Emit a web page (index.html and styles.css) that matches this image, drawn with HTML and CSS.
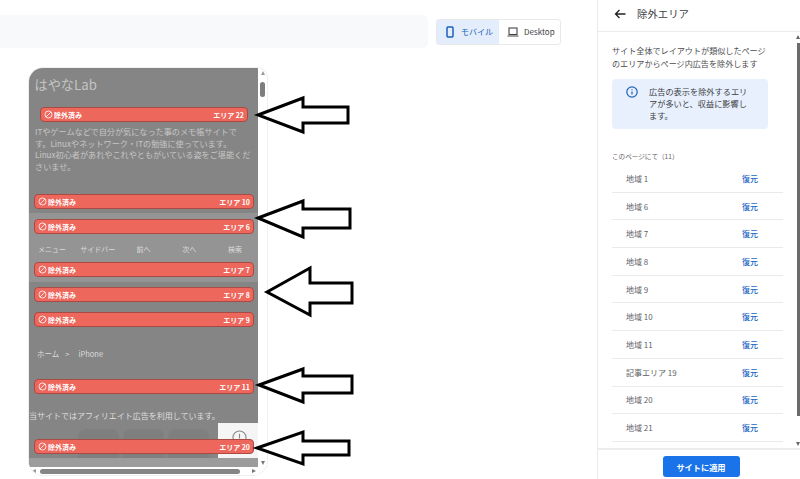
FILE: index.html
```html
<!DOCTYPE html>
<html lang="ja">
<head>
<meta charset="utf-8">
<title>除外エリア</title>
<link rel="stylesheet" href="styles.css">
</head>
<body>
<div class="page">
  <main class="main">
    <div class="topbar">
      <div class="search"></div>
      <div class="toggle">
        <div class="toggle-item active">
          <svg class="toggle-icon" viewBox="0 0 12 12"><rect x="3" y="1" width="6" height="10" rx="1" fill="none" stroke="#1a5fb8" stroke-width="1.5"/></svg>
          <span>モバイル</span>
        </div>
        <div class="toggle-item">
          <svg class="toggle-icon" viewBox="0 0 12 12"><rect x="2" y="2" width="8" height="6.5" fill="none" stroke="#444" stroke-width="1.1"/><path d="M0.5 10h11" stroke="#444" stroke-width="1.1"/></svg>
          <span>Desktop</span>
        </div>
      </div>
    </div>

    <div class="phone">
      <div class="view">
        <div class="site-title">はやなLab</div>
        <div class="banner banner-inset gap-title"><span class="banner-left"><svg class="ban" viewBox="0 0 10 10"><circle cx="5" cy="5" r="3.9"/><path d="M2.3 7.7 7.7 2.3"/></svg>除外済み</span><span>エリア 22</span></div>
        <p class="intro">ITやゲームなどで自分が気になった事のメモ帳サイトです。Linuxやネットワーク・ITの勉強に使っています。Linux初心者があれやこれやともがいている姿をご堪能くださいませ。</p>
        <div class="banner gap-intro"><span class="banner-left"><svg class="ban" viewBox="0 0 10 10"><circle cx="5" cy="5" r="3.9"/><path d="M2.3 7.7 7.7 2.3"/></svg>除外済み</span><span>エリア 10</span></div>
        <div class="navband">
          <div class="banner"><span class="banner-left"><svg class="ban" viewBox="0 0 10 10"><circle cx="5" cy="5" r="3.9"/><path d="M2.3 7.7 7.7 2.3"/></svg>除外済み</span><span>エリア 6</span></div>
          <nav class="sitenav"><span>メニュー</span><span>サイドバー</span><span>前へ</span><span>次へ</span><span>検索</span></nav>
          <div class="banner"><span class="banner-left"><svg class="ban" viewBox="0 0 10 10"><circle cx="5" cy="5" r="3.9"/><path d="M2.3 7.7 7.7 2.3"/></svg>除外済み</span><span>エリア 7</span></div>
        </div>
        <div class="banner gap-band"><span class="banner-left"><svg class="ban" viewBox="0 0 10 10"><circle cx="5" cy="5" r="3.9"/><path d="M2.3 7.7 7.7 2.3"/></svg>除外済み</span><span>エリア 8</span></div>
        <div class="banner gap-9"><span class="banner-left"><svg class="ban" viewBox="0 0 10 10"><circle cx="5" cy="5" r="3.9"/><path d="M2.3 7.7 7.7 2.3"/></svg>除外済み</span><span>エリア 9</span></div>
        <div class="crumb"><span>ホーム</span><span>&gt;</span><span class="crumb-leaf">iPhone</span></div>
        <div class="banner"><span class="banner-left"><svg class="ban" viewBox="0 0 10 10"><circle cx="5" cy="5" r="3.9"/><path d="M2.3 7.7 7.7 2.3"/></svg>除外済み</span><span>エリア 11</span></div>
        <div class="notice">当サイトではアフィリエイト広告を利用しています。</div>
        <div class="ad">
          <div class="ad-btn"></div><div class="ad-btn"></div><div class="ad-btn"></div>
          <div class="ad-info"><svg class="ad-icon" viewBox="0 0 16 16"><circle cx="8" cy="8" r="7"/><path d="M8 4v5"/></svg></div>
          <div class="banner banner-over"><span class="banner-left"><svg class="ban" viewBox="0 0 10 10"><circle cx="5" cy="5" r="3.9"/><path d="M2.3 7.7 7.7 2.3"/></svg>除外済み</span><span>エリア 20</span></div>
        </div>
        <div class="endband"></div>
      </div>
      <div class="vbar">
        <i class="tri tri-up"></i>
        <div class="vthumb"></div>
        <i class="tri tri-down"></i>
      </div>
      <div class="hbar">
        <i class="tri tri-left"></i>
        <div class="hthumb"></div>
        <i class="tri tri-right"></i>
      </div>
    </div>
  </main>

  <aside class="side">
    <header class="side-head">
      <svg class="back" viewBox="0 0 12 12"><path d="M11.5 6H1.5M5.5 2 1.5 6l4 4" fill="none" stroke="#222" stroke-width="1.3"/></svg>
      <span>除外エリア</span>
    </header>
    <div class="side-body">
      <div class="side-scroll">
        <p class="desc">サイト全体でレイアウトが類似したページのエリアからページ内広告を除外します</p>
        <div class="info">
          <svg class="info-icon" viewBox="0 0 12 12"><circle cx="6" cy="6" r="5.2" fill="none" stroke="#1a5fb8" stroke-width="1.2"/><path d="M6 5.4v3.2M6 3.2v1.1" stroke="#1a5fb8" stroke-width="1.2"/></svg>
          <p>広告の表示を除外するエリアが多いと、収益に影響します。</p>
        </div>
        <div class="count">このページにて（11）</div>
        <ul class="list">
          <li><span>地域 1</span><a>復元</a></li>
          <li><span>地域 6</span><a>復元</a></li>
          <li><span>地域 7</span><a>復元</a></li>
          <li><span>地域 8</span><a>復元</a></li>
          <li><span>地域 9</span><a>復元</a></li>
          <li><span>地域 10</span><a>復元</a></li>
          <li><span>地域 11</span><a>復元</a></li>
          <li><span>記事エリア 19</span><a>復元</a></li>
          <li><span>地域 20</span><a>復元</a></li>
          <li><span>地域 21</span><a>復元</a></li>
        </ul>
      </div>
      <div class="side-bar">
        <i class="tri tri-up tri-dark"></i>
        <div class="side-thumb"></div>
        <i class="tri tri-down tri-dark"></i>
      </div>
    </div>
    <footer class="side-foot"><button class="apply">サイトに適用</button></footer>
  </aside>
</div>

<svg class="arrows" viewBox="0 0 800 479">
  <path d="M258 115 303 98V107H348V123H303V132Z"/>
  <path d="M258 218 303 201V209H350V228H303V237Z"/>
  <path d="M267 292 310 268V283H352V303H310V315Z"/>
  <path d="M259 385 303 369V376H352V393H303V402Z"/>
  <path d="M257 448 303 432V441H349V455H303V464Z"/>
</svg>
</body>
</html>
```

FILE: styles.css
```css
* { box-sizing: border-box; }
html, body { margin: 0; height: 100%; overflow: hidden; }
body {
  position: relative;
  background: #fff;
  font-family: "Noto Sans CJK JP", "Noto Sans", sans-serif;
  color: #3c4043;
}
p { margin: 0; }
.page { display: flex; height: 479px; }

/* main */
.main { width: 597px; flex: none; padding-top: 15px; }
.topbar { display: flex; align-items: center; height: 33px; }
.search { width: 428px; height: 33px; background: #f8f9fa; border-radius: 0 6px 6px 0; }
.toggle {
  display: flex;
  margin-left: 8px;
  width: 125px;
  height: 26px;
  border: 1px solid #e6e8eb;
  border-radius: 3px;
  overflow: hidden;
  font-size: 8px;
}
.toggle-item { display: flex; align-items: center; gap: 5px; padding-left: 8px; flex: 1; color: #3c4043; }
.toggle-item.active { flex: none; width: 62px; background: #e3edfb; color: #1a5fb8; padding-left: 7px; }
.toggle-icon { width: 12px; height: 12px; flex: none; }

/* phone preview */
.phone {
  display: grid;
  grid-template-columns: 229px 9px;
  grid-template-rows: 399px 8px;
  width: 238px;
  height: 407px;
  margin: 20px 0 0 29px;
  border-radius: 14px 10px 14px 14px;
  box-shadow: 0 0 0 1px #eeeff1;
  overflow: hidden;
}
.view { position: relative; background: #858585; overflow: hidden; color: #d2d2d2; display: flex; flex-direction: column; }
.site-title { margin: 7px 0 0 5.5px; height: 21px; font-size: 13.2px; line-height: 20px; color: #c4c4c4; }
.banner {
  flex: none;
  display: flex;
  align-items: center;
  justify-content: space-between;
  width: 220px;
  height: 15px;
  margin-left: 5px;
  padding: 0 3px 0 3px;
  background: #ee675c;
  border: 1px solid #a94a44;
  border-radius: 4px;
  color: #fff;
  font-size: 7px;
  font-weight: 700;
}
.banner-inset { width: 208px; margin-left: 11px; }
.gap-title { margin-top: 11px; }
.gap-intro { margin-top: 22px; }
.gap-band { margin-top: 5px; }
.gap-9 { margin-top: 10px; }
.banner-left { display: flex; align-items: center; gap: 1px; }
.ban { width: 9px; height: 9px; fill: none; stroke: #fff; stroke-width: 0.9; }
.intro { margin: 4px 7px 0 6px; height: 46px; font-size: 8.15px; line-height: 11.5px; color: #c6c6c6; }
.navband {
  margin-top: 4px;
  height: 69px;
  padding-top: 6px;
  background: #949494;
}
.sitenav { display: grid; grid-template-columns: repeat(5, 1fr); justify-items: center; align-items: center; height: 28px; padding-top: 2px; font-size: 7px; color: #dcdcdc; }
.crumb { display: flex; gap: 6px; height: 52px; align-items: flex-end; padding: 0 0 20px 8px; font-size: 7.5px; color: #dcdcdc; }
.crumb-leaf { margin-left: 3px; }
.notice { height: 29px; padding-top: 15px; font-size: 8px; line-height: 14px; color: #dedede; white-space: nowrap; }
.ad { position: relative; display: flex; align-items: flex-end; flex: none; height: 35px; padding-left: 49px; gap: 4px; }
.ad-btn { width: 41px; height: 29px; background: #7f7f7f; border-radius: 8px 8px 0 0; }
.ad-info { position: absolute; right: 0; top: 0; width: 40px; height: 35px; background: #f5f5f5; display: flex; justify-content: center; padding: 7px 0 0 3px; }
.ad-icon { width: 15px; height: 15px; fill: none; stroke: #8a8a8a; stroke-width: 1.2; }
.banner-over { position: absolute; left: 0; top: 16px; }
.endband { flex: none; height: 9px; background: #9c9c9c; }

.vbar { position: relative; background: #fff; display: flex; flex-direction: column; align-items: center; padding-top: 3px; }
.vthumb { width: 5px; height: 15px; margin-top: 7px; background: #7d7d7d; border-radius: 3px; }
.hbar { display: flex; align-items: center; background: #fff; padding-left: 3px; }
.hthumb { flex: none; width: 200px; height: 5px; margin: 0 12px 0 4px; background: #858585; border-radius: 3px; }
.tri { display: block; width: 0; height: 0; flex: none; border-style: solid; border-color: transparent; }
.tri-up { border-width: 0 2.5px 4px; border-bottom-color: #9a9a9a; }
.tri-down { position: absolute; bottom: 2px; border-width: 4px 2.5px 0; border-top-color: #777; }
.tri-left { border-width: 2.5px 4px 2.5px 0; border-right-color: #9a9a9a; }
.tri-right { border-width: 2.5px 0 2.5px 4px; border-left-color: #777; }

/* side panel */
.side {
  width: 203px;
  flex: none;
  display: flex;
  flex-direction: column;
  border-left: 1px solid #e8eaed;
}
.side-head {
  display: flex;
  align-items: center;
  height: 32px;
  padding: 0 0 4px 16px;
  gap: 11px;
  flex: none;
  border-bottom: 1px solid #eceded;
  font-size: 10.4px;
  color: #3c4043;
}
.back { width: 12px; height: 12px; }
.side-body { flex: 1; display: flex; min-height: 0; }
.side-scroll { width: 199px; padding: 12px 14px 0 14px; overflow: hidden; }
.desc { font-size: 8.1px; line-height: 13px; width: 160px; color: #4a4d50; }
.info {
  display: flex;
  width: 156px;
  height: 50px;
  margin-top: 9px;
  padding: 6px 16px 0 14px;
  gap: 11px;
  background: #e8f0fe;
  border-radius: 4px;
  font-size: 8.2px;
  line-height: 12.2px;
}
.info-icon { width: 12px; height: 12px; flex: none; margin-top: 1px; }
.count { margin-top: 22px; font-size: 6.6px; line-height: 10px; color: #5f6368; }
.list { list-style: none; margin: 4px 0 0; padding: 0; width: 171px; }
.list li {
  display: flex;
  justify-content: space-between;
  align-items: center;
  height: 27.7px;
  padding: 0 25px 0 14px;
  border-bottom: 1px solid #e8eaed;
  font-size: 8px;
  color: #5f6368;
}
.list a { color: #1a66c4; font-weight: 500; }
.side-bar { position: relative; flex: 1; display: flex; flex-direction: column; align-items: center; padding-top: 3px; }
.side-thumb { width: 3px; height: 373px; margin-top: 4px; background: #6b6b6b; }
.tri-dark { border-bottom-color: #666; border-top-color: #666; }
.side-foot {
  flex: none;
  display: flex;
  justify-content: center;
  height: 31px;
  padding: 6px 0 0 4px;
  border-top: 2px solid #eceded;
}
.apply {
  width: 77px;
  height: 21px;
  border: 0;
  border-radius: 3px;
  background: #1a73e8;
  color: #fff;
  font-family: inherit;
  font-size: 8.2px;
  font-weight: 700;
  padding: 0;
}

/* annotation arrows */
.arrows { position: absolute; left: 0; top: 0; width: 800px; height: 479px; fill: #fff; stroke: #000; stroke-width: 3; pointer-events: none; }
```
